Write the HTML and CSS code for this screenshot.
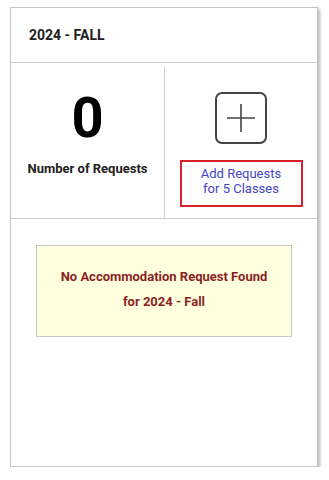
FILE: index.html
```html
<!DOCTYPE html>
<html lang="en">
<head>
<meta charset="utf-8">
<title>2024 - Fall</title>
<link rel="stylesheet" href="styles.css">
</head>
<body>
<div class="card">
  <div class="card-header">2024 - FALL</div>
  <div class="stats">
    <div class="stat">
      <div class="stat-number">0</div>
      <div class="stat-label">Number of Requests</div>
    </div>
    <div class="stat stat-add">
      <svg class="plus-icon" width="52" height="52" viewBox="0 0 52 52" aria-hidden="true">
        <rect x="1" y="1" width="50" height="50" rx="6" ry="6" fill="none" stroke="#444" stroke-width="2"/>
        <path d="M12 26 H40 M26 12 V40" stroke="#444" stroke-width="1.6" fill="none"/>
      </svg>
      <a class="add-link" href="#">Add Requests<br>for 5 Classes</a>
    </div>
  </div>
  <div class="card-body">
    <div class="notice">No Accommodation Request Found<br>for 2024 - Fall</div>
  </div>
</div>
</body>
</html>
```

FILE: styles.css
```css
html, body {
  margin: 0;
  padding: 0;
  background: #ffffff;
}

body {
  padding: 7px 0 0 10px;
  font-family: Roboto, "Liberation Sans", Arial, sans-serif;
}

.card {
  box-sizing: border-box;
  width: 308px;
  height: 460px;
  border: 1px solid #c4c4c4;
  background: #fff;
  box-shadow: 2px 2px 3px rgba(0, 0, 0, 0.28);
  display: flex;
  flex-direction: column;
}

.card-header {
  height: 54px;
  line-height: 54px;
  padding-left: 18px;
  font-size: 14px;
  font-weight: 700;
  color: #222;
  border-bottom: 1px solid #cfcfcf;
}

.stats {
  display: grid;
  grid-template-columns: 1fr 1fr;
  padding-top: 3px;
  height: 152px;
  border-bottom: 1px solid #cfcfcf;
}

.stat {
  display: flex;
  flex-direction: column;
  align-items: center;
}

.stat-number {
  margin-top: 24px;
  font-size: 56px;
  line-height: 56px;
  font-weight: 700;
  color: #000;
}

.stat-label {
  margin-top: 15px;
  font-size: 13px;
  line-height: 16px;
  font-weight: 700;
  color: #222;
}

.stat-add {
  border-left: 1px solid #cfcfcf;
}

.plus-icon {
  display: block;
  margin-top: 26px;
}

.add-link {
  box-sizing: border-box;
  display: block;
  width: 123px;
  margin-top: 16px;
  padding: 4px 0 9px;
  border: 2px solid #d7202b;
  text-align: center;
  font-size: 13px;
  line-height: 15px;
  color: #4343c6;
  text-decoration: none;
}

.card-body {
  flex: 1;
  display: flex;
  flex-direction: column;
  align-items: center;
  padding-top: 26px;
}

.notice {
  box-sizing: border-box;
  width: 256px;
  padding: 18px 10px 22px;
  background: #ffffe0;
  border: 1px solid #c6c6c0;
  text-align: center;
  font-size: 13px;
  line-height: 25px;
  font-weight: 700;
  color: #8b1f1f;
}
```
